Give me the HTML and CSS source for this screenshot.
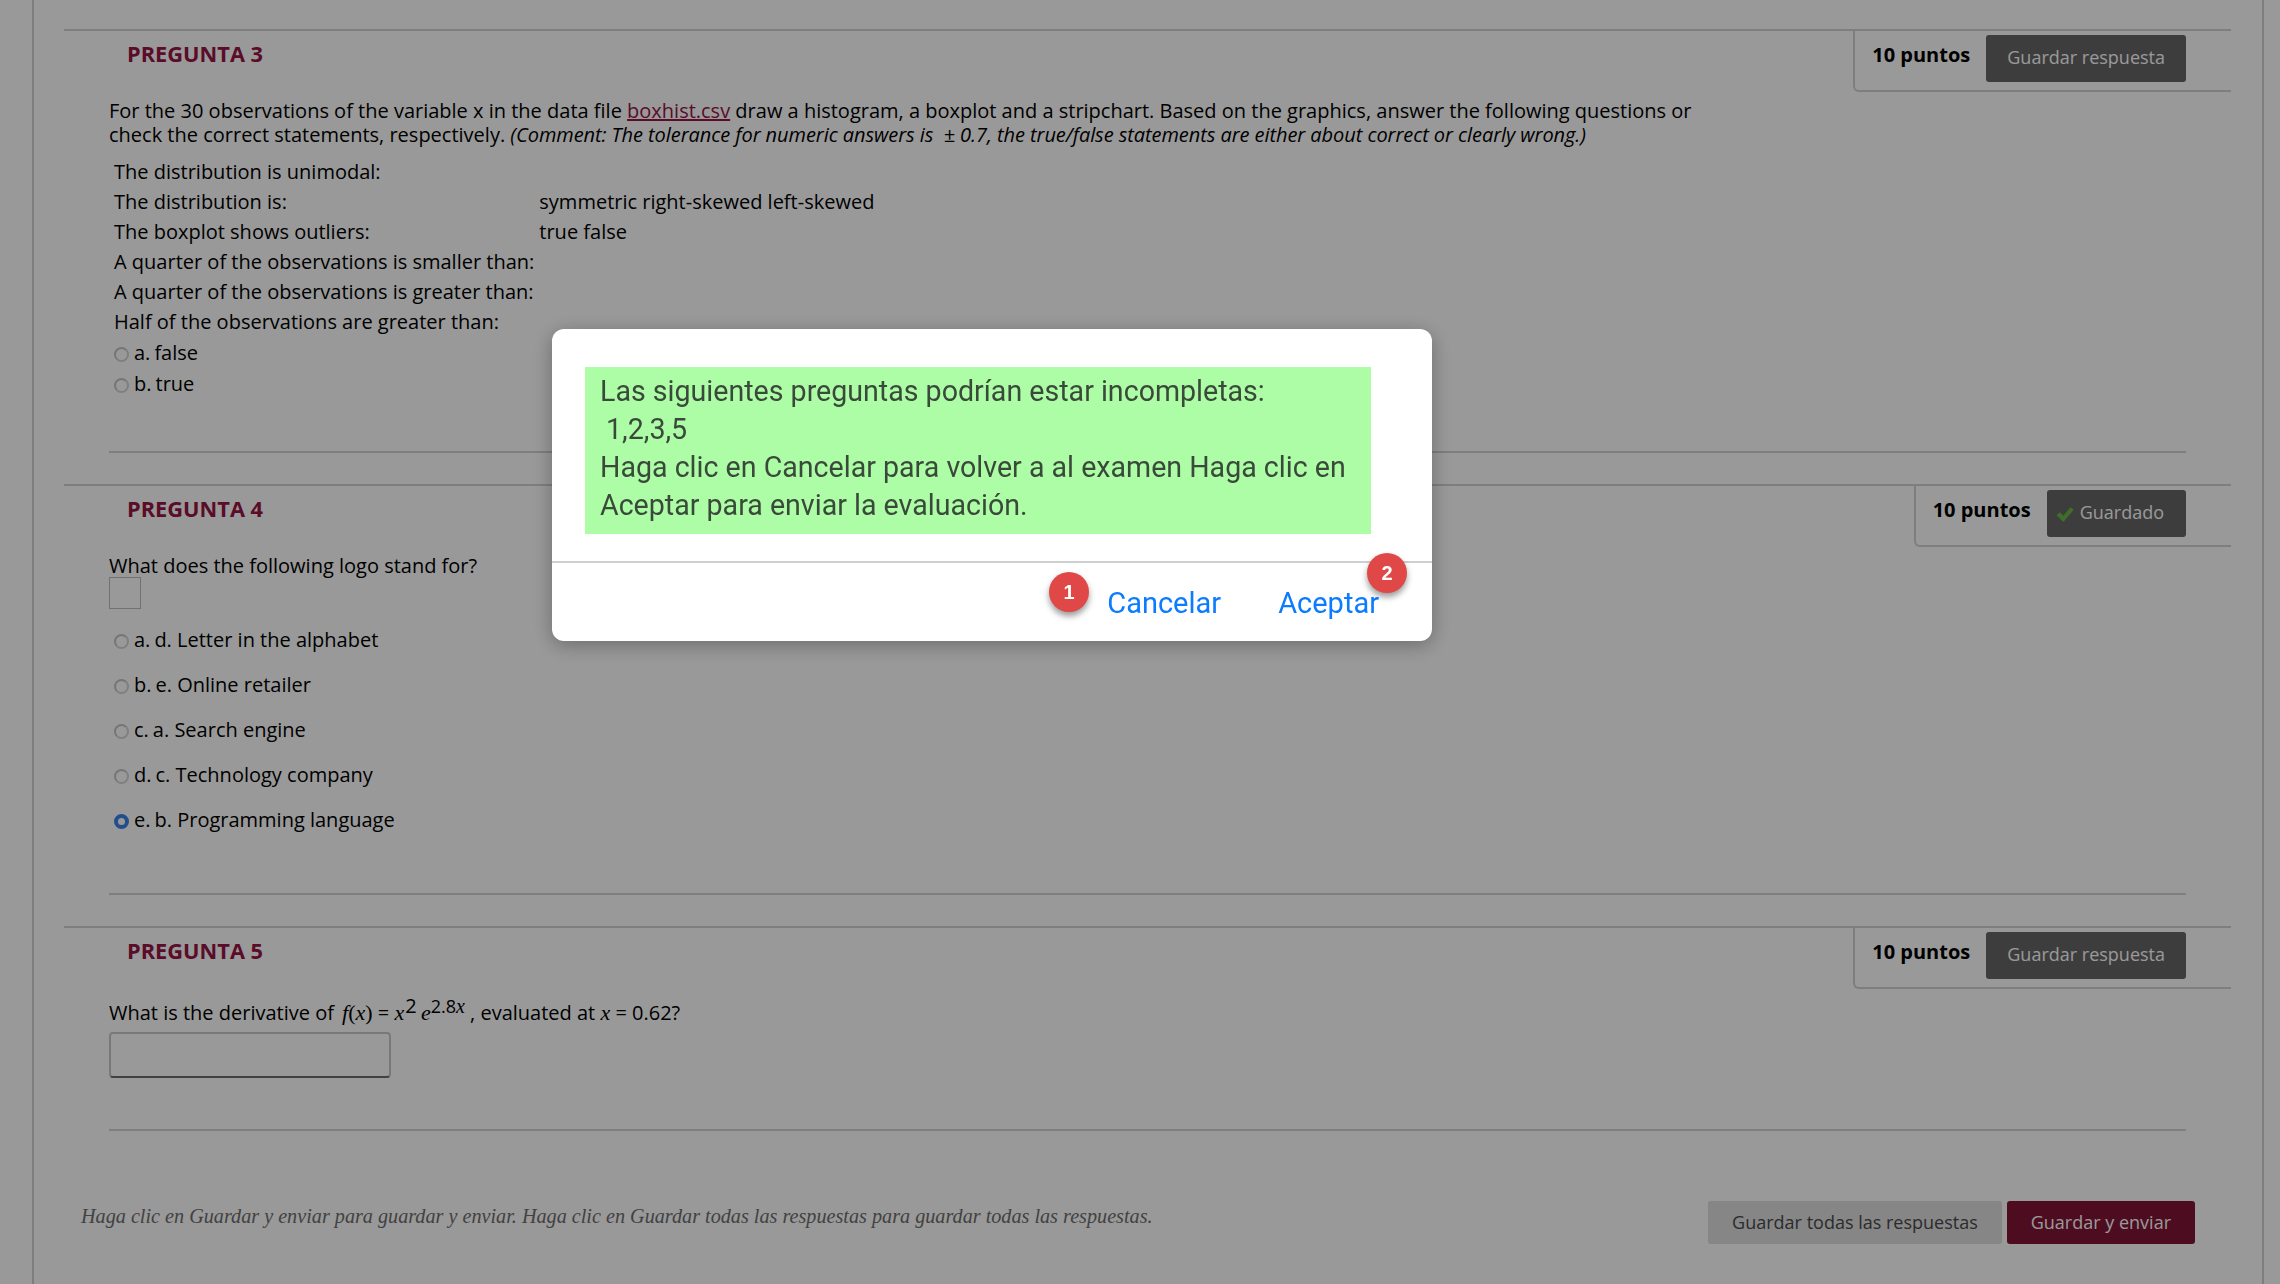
FILE: index.html
```html
<!DOCTYPE html>
<html lang="es">
<head>
<meta charset="utf-8">
<title>Examen</title>
<link rel="stylesheet" href="styles.css">
</head>
<body>
<main class="page">
  <section class="question q3">
    <header class="q-head">
      <h2 class="q-title">PREGUNTA 3</h2>
      <div class="points-box">
        <strong class="points">10 puntos</strong>
        <button class="btn btn-dark">Guardar respuesta</button>
      </div>
    </header>
    <div class="q-body">
      <p class="q-text">For the 30 observations of the variable x in the data file <a class="link" href="#">boxhist.csv</a> draw a histogram, a boxplot and a stripchart. Based on the graphics, answer the following questions or<br>check the correct statements, respectively. <em class="comment">(Comment: The tolerance for numeric answers is &nbsp;± 0.7, the true/false statements are either about correct or clearly wrong.)</em></p>
      <table class="stmts">
        <tr><td>The distribution is unimodal:</td><td></td></tr>
        <tr><td>The distribution is:</td><td>symmetric right-skewed left-skewed</td></tr>
        <tr><td>The boxplot shows outliers:</td><td>true false</td></tr>
        <tr><td>A quarter of the observations is smaller than:</td><td></td></tr>
        <tr><td>A quarter of the observations is greater than:</td><td></td></tr>
        <tr><td>Half of the observations are greater than:</td><td></td></tr>
      </table>
      <ul class="opts opts-tight">
        <li class="opt"><span class="radio"></span><span class="opt-key">a.</span><span>false</span></li>
        <li class="opt"><span class="radio"></span><span class="opt-key">b.</span><span>true</span></li>
      </ul>
    </div>
    <hr class="q-rule">
  </section>

  <section class="question q4">
    <header class="q-head">
      <h2 class="q-title">PREGUNTA 4</h2>
      <div class="points-box">
        <strong class="points">10 puntos</strong>
        <button class="btn btn-dark btn-saved">
          <svg class="check" viewBox="0 0 16 16" width="18" height="18" aria-hidden="true"><path d="M0.5 9 L3.5 6.5 L6.5 9.5 L13 2 L15.8 4.2 L6.5 15 Z" fill="#69b846"/></svg>
          Guardado
        </button>
      </div>
    </header>
    <div class="q-body">
      <p class="q-text">What does the following logo stand for?</p>
      <div class="logo-box"></div>
      <ul class="opts opts-wide">
        <li class="opt"><span class="radio"></span><span class="opt-key">a.</span><span>d. Letter in the alphabet</span></li>
        <li class="opt"><span class="radio"></span><span class="opt-key">b.</span><span>e. Online retailer</span></li>
        <li class="opt"><span class="radio"></span><span class="opt-key">c.</span><span>a. Search engine</span></li>
        <li class="opt"><span class="radio"></span><span class="opt-key">d.</span><span>c. Technology company</span></li>
        <li class="opt"><span class="radio radio-on"></span><span class="opt-key">e.</span><span>b. Programming language</span></li>
      </ul>
    </div>
    <hr class="q-rule">
  </section>

  <section class="question q5">
    <header class="q-head">
      <h2 class="q-title">PREGUNTA 5</h2>
      <div class="points-box">
        <strong class="points">10 puntos</strong>
        <button class="btn btn-dark">Guardar respuesta</button>
      </div>
    </header>
    <div class="q-body">
      <p class="q-text">What is the derivative of <i class="m m-first">f</i><span class="m">(</span><i class="m">x</i><span class="m">)</span> = <i class="m">x</i><span class="up">2</span> <i class="m m-e">e</i><span class="up up2">2.8<i class="m m-sup">x</i></span> , evaluated at <i class="m">x</i> = 0.62?</p>
      <div class="answer"></div>
    </div>
    <hr class="q-rule">
  </section>

  <footer class="foot">
    <p class="foot-note">Haga clic en Guardar y enviar para guardar y enviar. Haga clic en Guardar todas las respuestas para guardar todas las respuestas.</p>
    <div class="foot-actions">
      <button class="btn btn-light">Guardar todas las respuestas</button>
      <button class="btn btn-maroon">Guardar y enviar</button>
    </div>
  </footer>
</main>

<div class="overlay">
  <div class="modal">
    <div class="modal-body">
      <div class="notice">Las siguientes preguntas podrían estar incompletas:<br><span class="nums">1,2,3,5</span><br>Haga clic en Cancelar para volver a al examen Haga clic en<br>Aceptar para enviar la evaluación.</div>
    </div>
    <div class="modal-actions">
      <a class="action" href="#">Cancelar</a>
      <a class="action" href="#">Aceptar</a>
    </div>
    <span class="badge badge-1">1</span>
    <span class="badge badge-2">2</span>
  </div>
</div>
</body>
</html>
```

FILE: styles.css
```css
* { box-sizing: border-box; }
html, body { margin: 0; padding: 0; height: 100%; }
body {
  background: #fff;
  color: #000;
  font-family: "Open Sans", "Noto Sans", sans-serif;
  font-size: 20px;
  line-height: 24px;
  overflow: hidden;
}
.page {
  width: 2232px;
  margin-left: 32px;
  height: 1284px;
  padding: 29px 29px 0 30px;
  border-left: 2px solid #d2d2d2;
  border-right: 2px solid #d2d2d2;
}
.question { width: 2167px; }
.q-head {
  display: flex;
  justify-content: space-between;
  align-items: flex-start;
  border-top: 2px solid #d2d2d2;
  height: 62px;
}
.q-title {
  margin: 9px 0 0 63px;
  color: #961443;
  font-size: 21.8px;
  line-height: 27px;
  font-weight: 700;
}
.points-box {
  display: flex;
  align-items: flex-start;
  gap: 16px;
  height: 61px;
  padding: 4px 45px 0 17px;
  border-left: 2px solid #d2d2d2;
  border-bottom: 2px solid #d2d2d2;
  border-bottom-left-radius: 6px;
}
.points { font-size: 20px; line-height: 40px; font-weight: 700; }
.btn {
  border: 0;
  border-radius: 3px;
  font-family: inherit;
  font-size: 18px;
  line-height: 24px;
  white-space: nowrap;
}
.btn-dark {
  height: 47px;
  padding: 0 21px 3px;
  background: #666;
  color: #fff;
}
.btn-saved {
  display: flex;
  align-items: center;
  gap: 6px;
  padding: 0 22px 3px 9px;
}
.check { flex: none; margin-top: 4px; }
.q-body { padding: 8px 45px 0; }
.q-text { margin: 0; }
.comment { letter-spacing: -0.06px; }
.link { color: #961443; }
.stmts {
  border-collapse: collapse;
  margin: 10px 0 0 5px;
}
.stmts td { height: 30px; padding: 0 5px 0 0; vertical-align: middle; }
.opts { list-style: none; margin: 0; padding: 0; }
.opts-tight { margin-top: 0; }
.opts-tight .opt { height: 31px; }
.opts-wide { margin-top: 8px; }
.opts-wide .opt { height: 45px; }
.opt { display: flex; align-items: center; padding-left: 5px; }
.radio {
  flex: none;
  width: 15px;
  height: 15px;
  margin: 3px 5px 0 0;
  border: 2px solid #d4d4d4;
  border-top-color: #c4c4c4;
  border-left-color: #c4c4c4;
  border-radius: 50%;
}
.radio-on { background: #fff; border: 4px solid #3d80ea; }
.opt-key { margin-right: 4px; }
.logo-box {
  width: 32px;
  height: 32px;
  margin-top: -1px;
  border: 1px solid #bdbdbd;
}
.q-rule {
  height: 2px;
  margin: 0 45px;
  border: 0;
  background: #d2d2d2;
}
.q3 .q-body { height: 360px; }
.q3 { margin-bottom: 31px; }
.q4 .q-body { height: 347px; }
.q4 { margin-bottom: 31px; }
.q5 .q-body { height: 141px; padding-top: 13px; }
.m { font-family: "Liberation Serif", serif; font-size: 22px; }
.m-first { margin-left: 3px; }
.m-e { margin-left: -1px; }
.m-sup { font-size: 20px; }
.up { position: relative; top: -7px; margin-left: 1px; }
.up2 { font-size: 18px; margin-left: 0; }
.answer {
  width: 282px;
  height: 46px;
  margin-top: 7px;
  border: 2px solid #cacaca;
  border-bottom-color: #6d6d6d;
  border-radius: 4px;
}
.foot {
  display: flex;
  justify-content: space-between;
  align-items: flex-start;
  margin-top: 70px;
  padding-left: 17px;
  width: 2131px;
}
.foot-note {
  margin: 3px 0 0;
  color: #6e6e6e;
  font-family: "Liberation Serif", serif;
  font-style: italic;
  font-size: 20.2px;
  line-height: 24px;
}
.foot-actions { display: flex; gap: 5px; }
.btn-light, .btn-maroon { height: 43px; padding: 0 24px 2px; }
.btn-light { background: #dfdfdf; color: #4a4a4a; }
.btn-maroon { background: #801434; color: #fff; }
.overlay {
  position: fixed;
  inset: 0;
  background: rgba(0, 0, 0, 0.4);
}
.modal {
  position: absolute;
  left: 552px;
  top: 329px;
  width: 880px;
  height: 312px;
  background: #fff;
  border-radius: 12px;
  box-shadow: 0 4px 20px rgba(0, 0, 0, 0.3);
}
.modal-body {
  height: 234px;
  padding: 38px 0 0 33px;
  border-bottom: 2px solid #d0d0d0;
}
.notice {
  width: 786px;
  height: 167px;
  padding: 5px 15px 0;
  background: #adfca6;
  color: #3a4a3a;
  font-family: Roboto, "Noto Sans", sans-serif;
  font-size: 28.6px;
  line-height: 38px;
}
.nums { padding-left: 6px; }
.modal-actions {
  display: flex;
  justify-content: flex-end;
  gap: 57px;
  padding: 22px 53px 0 0;
}
.action {
  color: #0b7bff;
  font-family: Roboto, "Noto Sans", sans-serif;
  font-size: 29px;
  line-height: 36px;
  text-decoration: none;
}
.badge {
  position: absolute;
  width: 40px;
  height: 40px;
  border-radius: 50%;
  background: #e04848;
  color: #fff;
  font-family: "Liberation Sans", sans-serif;
  font-size: 20px;
  font-weight: 700;
  line-height: 40px;
  text-align: center;
  box-shadow: 0 4px 6px rgba(0, 0, 0, 0.4);
}
.badge-1 { left: 497px; top: 243px; }
.badge-2 { left: 815px; top: 224px; }
```
